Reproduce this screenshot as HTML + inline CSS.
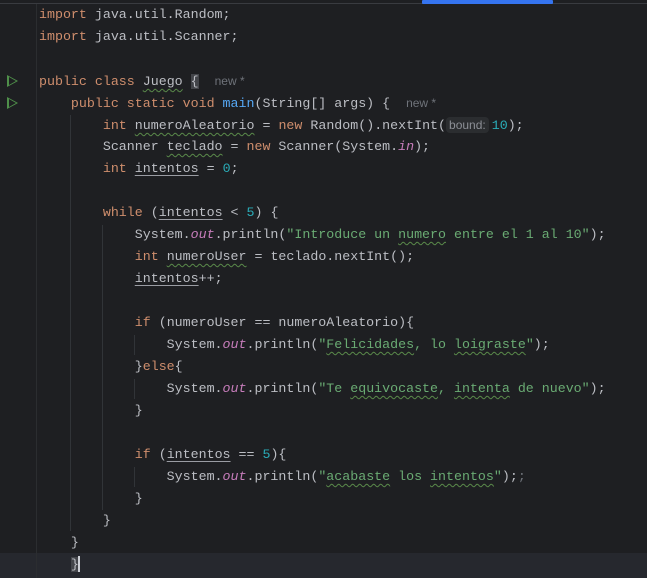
<!DOCTYPE html>
<html><head><meta charset="utf-8"><style>
html,body{margin:0;padding:0;}
body{width:647px;height:578px;background:#1e1f22;position:relative;overflow:hidden;font-family:"Liberation Mono",monospace;font-size:13.3px;color:#bcbec4;}
.l{position:absolute;left:39px;height:22px;line-height:22px;white-space:pre;}
.k{color:#cf8e6d}.m{color:#56a8f5}.n{color:#2aacb8}.s{color:#6aab73}.f{color:#c77dbb;font-style:italic}
.u{text-decoration:underline;text-decoration-color:#9a9ca3;text-underline-offset:3px}
.w{text-decoration:underline wavy #5a8a4a;text-underline-offset:3px;text-decoration-thickness:1px}
.h{font-family:"Liberation Sans",sans-serif;font-size:12px;color:#6f737a}
.hint{font-family:"Liberation Sans",sans-serif;font-size:12px;color:#8c8f96;background:#2b2d30;border-radius:4px;padding:1px 3px;margin-right:3px}
.g{position:absolute;width:1px;background:#313438}
.run{position:absolute;left:7px;width:0;height:0;border-top:6px solid transparent;border-bottom:6px solid transparent;border-left:11px solid #4f8f4a}
.run:after{content:"";position:absolute;left:-9px;top:-4px;border-top:4px solid transparent;border-bottom:4px solid transparent;border-left:7px solid #1e1f22}
</style></head><body>
<div style="position:absolute;left:0;top:3px;width:647px;height:1px;background:#393b40"></div>
<div style="position:absolute;left:422px;top:0;width:131px;height:4px;background:#3574f0;border-radius:1px"></div>
<div style="position:absolute;left:0;top:553px;width:647px;height:25px;background:#26282e"></div>
<div class="g" style="left:36px;top:4px;height:574px;background:#2b2d30"></div>
<div class="g" style="left:70px;top:115px;height:416px"></div>
<div class="g" style="left:102px;top:225px;height:285px"></div>
<div class="g" style="left:134px;top:335px;height:20px"></div>
<div class="g" style="left:134px;top:379px;height:20px"></div>
<div class="g" style="left:134px;top:467px;height:20px"></div>
<div class="run" style="top:75px"></div>
<div class="run" style="top:97px"></div>

<div class="l" style="top:4px"><span class="k">import</span> java.util.Random;</div>
<div class="l" style="top:26px"><span class="k">import</span> java.util.Scanner;</div>
<div class="l" style="top:70px"><span class="k">public class</span> <span class="w">Juego</span> <span style="background:#43454a">{</span>  <span class="h">new *</span></div>
<div class="l" style="top:92px">    <span class="k">public static void</span> <span class="m">main</span>(String[] args) {  <span class="h">new *</span></div>
<div class="l" style="top:114px">        <span class="k">int</span> <span class="w">numeroAleatorio</span> = <span class="k">new</span> Random().nextInt(<span class="hint">bound:</span><span class="n">10</span>);</div>
<div class="l" style="top:136px">        Scanner <span class="w">teclado</span> = <span class="k">new</span> Scanner(System.<span class="f">in</span>);</div>
<div class="l" style="top:158px">        <span class="k">int</span> <span class="u">intentos</span> = <span class="n">0</span>;</div>
<div class="l" style="top:202px">        <span class="k">while</span> (<span class="u">intentos</span> &lt; <span class="n">5</span>) {</div>
<div class="l" style="top:224px">            System.<span class="f">out</span>.println(<span class="s">"Introduce un <span class="w">numero</span> entre el 1 al 10"</span>);</div>
<div class="l" style="top:246px">            <span class="k">int</span> <span class="w">numeroUser</span> = teclado.nextInt();</div>
<div class="l" style="top:268px">            <span class="u">intentos</span>++;</div>
<div class="l" style="top:312px">            <span class="k">if</span> (numeroUser == numeroAleatorio){</div>
<div class="l" style="top:334px">                System.<span class="f">out</span>.println(<span class="s">"<span class="w">Felicidades</span>, lo <span class="w">loigraste</span>"</span>);</div>
<div class="l" style="top:356px">            }<span class="k">else</span>{</div>
<div class="l" style="top:378px">                System.<span class="f">out</span>.println(<span class="s">"Te <span class="w">equivocaste</span>, <span class="w">intenta</span> de nuevo"</span>);</div>
<div class="l" style="top:400px">            }</div>
<div class="l" style="top:444px">            <span class="k">if</span> (<span class="u">intentos</span> == <span class="n">5</span>){</div>
<div class="l" style="top:466px">                System.<span class="f">out</span>.println(<span class="s">"<span class="w">acabaste</span> los <span class="w">intentos</span>"</span>);<span style="color:#6f737a">;</span></div>
<div class="l" style="top:488px">            }</div>
<div class="l" style="top:510px">        }</div>
<div class="l" style="top:532px">    }</div>
<div class="l" style="top:554px">    <span style="background:#43454a">}</span><span style="display:inline-block;width:2px;height:16px;background:#ced0d6;vertical-align:middle;margin-left:-1px"></span></div>
</body></html>
